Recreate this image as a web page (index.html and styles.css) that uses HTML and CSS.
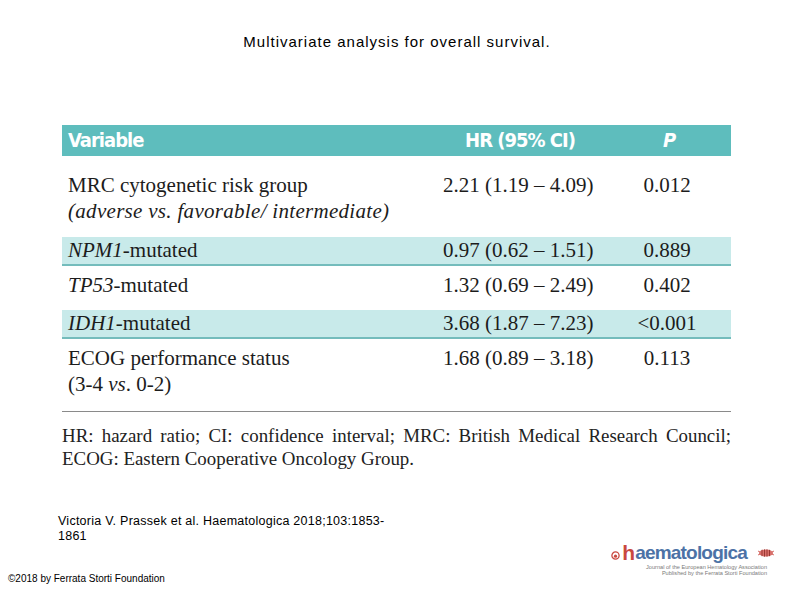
FILE: index.html
```html
<!DOCTYPE html>
<html lang="en">
<head>
<meta charset="utf-8">
<title>Multivariate analysis for overall survival</title>
<link rel="stylesheet" href="styles.css">
</head>
<body>
<div class="page">
  <div class="title">Multivariate analysis for overall survival.</div>

  <div class="tbl">
    <div class="head">
      <div class="c-var">Variable</div>
      <div class="c-hr">HR (95% CI)</div>
      <div class="c-p"><i>P</i></div>
    </div>
    <div class="row r-mrc">
      <div class="c-var">MRC cytogenetic risk group<br><i class="ital">(adverse vs. favorable/ intermediate)</i></div>
      <div class="c-hr">2.21 (1.19 – 4.09)</div>
      <div class="c-p">0.012</div>
    </div>
    <div class="row shade r-short">
      <div class="c-var"><i>NPM1</i>-mutated</div>
      <div class="c-hr">0.97 (0.62 – 1.51)</div>
      <div class="c-p">0.889</div>
    </div>
    <div class="row r-tp53">
      <div class="c-var"><i>TP53</i>-mutated</div>
      <div class="c-hr">1.32 (0.69 – 2.49)</div>
      <div class="c-p">0.402</div>
    </div>
    <div class="row shade r-short">
      <div class="c-var"><i>IDH1</i>-mutated</div>
      <div class="c-hr">3.68 (1.87 – 7.23)</div>
      <div class="c-p">&lt;0.001</div>
    </div>
    <div class="row r-ecog">
      <div class="c-var">ECOG performance status<br>(3-4 <i>vs</i>. 0-2)</div>
      <div class="c-hr">1.68 (0.89 – 3.18)</div>
      <div class="c-p">0.113</div>
    </div>
  </div>

  <div class="foot">
    <div class="foot-1">HR: hazard ratio; CI: confidence interval; MRC: British Medical Research Council;</div>
    <div class="foot-2">ECOG: Eastern Cooperative Oncology Group.</div>
  </div>

  <div class="cite">Victoria V. Prassek et al. Haematologica 2018;103:1853-1861</div>

  <div class="bottom">
    <div class="copy">©2018 by Ferrata Storti Foundation</div>
    <div class="logo">
      <div class="logo-main">
        <svg class="logo-drop" width="9" height="9" viewBox="0 0 9 9"><circle cx="4.5" cy="4.5" r="3.6" fill="none" stroke="#c9483f" stroke-width="1.3"/><circle cx="4.5" cy="5.2" r="1.6" fill="#c9483f"/></svg>
        <span class="logo-h">h</span><span class="logo-word">aematologica</span>
        <svg class="logo-bug" width="18" height="10" viewBox="0 0 18 10"><ellipse cx="9" cy="5" rx="7" ry="3.6" fill="#d9706b"/><path d="M5 1.8v6.4M7.5 1.3v7.4M10 1.3v7.4M12.5 1.8v6.4" stroke="#8a2a25" stroke-width="0.8"/><path d="M1 3l2 1M1 7l2-1M17 3l-2 1M17 7l-2-1" stroke="#c9483f" stroke-width="0.8"/></svg>
      </div>
      <div class="logo-sub">Journal of the European Hematology Association<br>Published by the Ferrata Storti Foundation</div>
    </div>
  </div>
</div>
</body>
</html>
```

FILE: styles.css
```css
html, body {
  margin: 0;
  padding: 0;
  background: #ffffff;
}

.page {
  width: 794px;
  height: 595px;
  overflow: hidden;
  font-family: "Liberation Sans", Arial, sans-serif;
  color: #000;
}

.title {
  padding-top: 34px;
  text-align: center;
  font-size: 15px;
  letter-spacing: 1px;
  line-height: 16px;
}

.tbl {
  margin: 75px 0 0 62px;
  width: 669px;
}

.head,
.row {
  display: grid;
  grid-template-columns: 375px 166px 128px;
  box-sizing: border-box;
}

.head {
  height: 31px;
  align-items: center;
  background: #5ebdbd;
  color: #ffffff;
  font-family: "Liberation Sans Narrow", "DejaVu Sans Condensed", sans-serif;
  font-weight: bold;
  font-size: 20px;
  letter-spacing: -1px;
  line-height: 31px;
}

.head .c-hr {
  text-align: center;
  padding-left: 0;
}

.head .c-p {
  padding-left: 4px;
}

.row {
  font-family: "Liberation Serif", "Times New Roman", serif;
  font-size: 21px;
  line-height: 26px;
  color: #1c1c1c;
  align-items: start;
}

.c-var {
  padding-left: 6px;
}

.c-hr {
  padding-left: 6px;
}

.c-p {
  text-align: center;
}

.shade {
  background: #c8eaea;
  border-bottom: 2px solid #74bcbc;
}

.r-mrc {
  height: 81px;
  padding-top: 16px;
}

.r-short {
  height: 29px;
  padding-top: 0;
}

.r-tp53 {
  height: 44px;
  padding-top: 6px;
}

.r-ecog {
  height: 73px;
  padding-top: 6px;
  border-bottom: 1.5px solid #8a8a8a;
}

.ital {
  letter-spacing: 0.3px;
}

.foot {
  margin: 12px 0 0 62px;
  width: 669px;
  font-family: "Liberation Serif", "Times New Roman", serif;
  font-size: 18.9px;
  line-height: 23px;
  color: #222;
}

.foot-1 {
  text-align: justify;
  text-align-last: justify;
}

.cite {
  margin: 44px 0 0 58px;
  width: 335px;
  font-size: 12.5px;
  letter-spacing: 0.25px;
  line-height: 15px;
}

.bottom {
  display: flex;
  justify-content: space-between;
  align-items: flex-start;
  margin-top: -2px;
}

.copy {
  margin-top: 31px;
  padding-left: 8px;
  font-size: 10px;
  line-height: 12px;
}

.logo {
  margin-right: 19px;
  display: flex;
  flex-direction: column;
  align-items: flex-end;
}

.logo-main {
  display: flex;
  align-items: center;
  height: 22px;
}

.logo-drop {
  margin-right: 2px;
  margin-top: 4px;
}

.logo-h {
  font-weight: bold;
  font-size: 21px;
  color: #c9483f;
  line-height: 22px;
}

.logo-word {
  font-weight: bold;
  font-size: 19px;
  letter-spacing: -0.8px;
  color: #4c72a6;
  line-height: 22px;
}

.logo-bug {
  margin-left: 10px;
}

.logo-sub {
  margin-right: 8px;
  font-size: 5.6px;
  line-height: 6px;
  color: #7a7a7a;
  text-align: right;
}
```
